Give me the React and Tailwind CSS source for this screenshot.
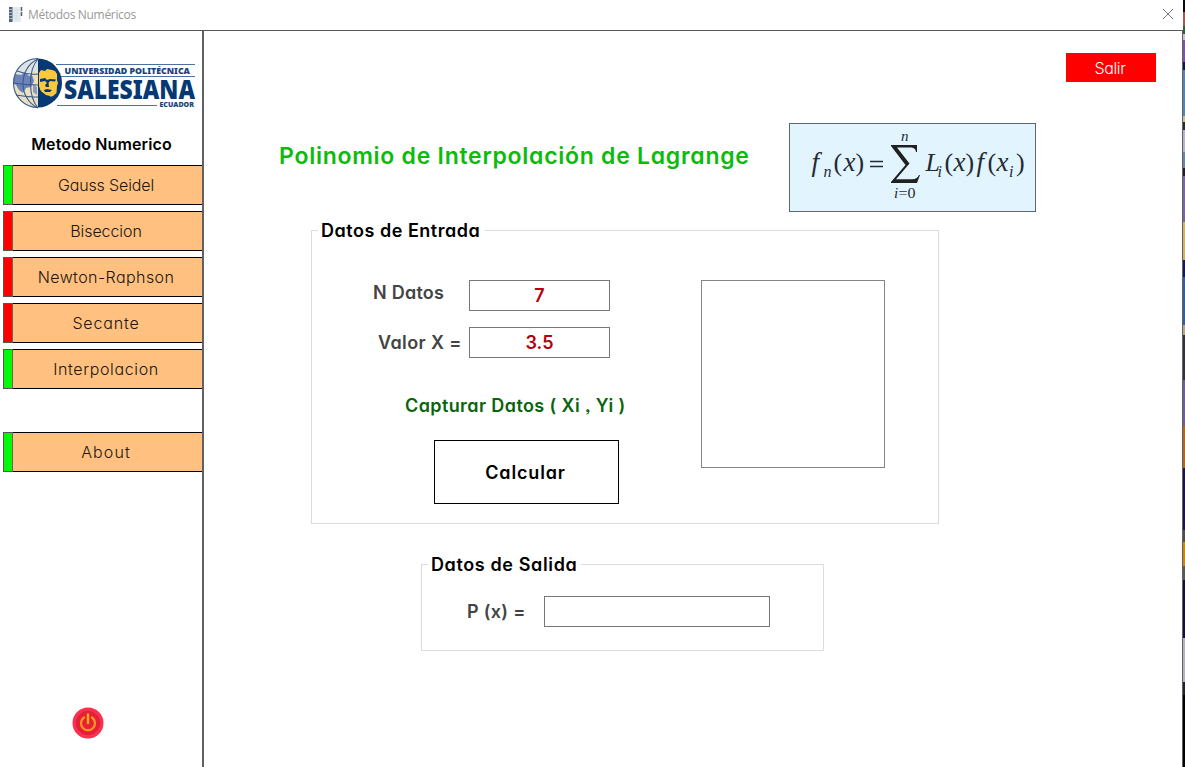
const gothic = "font-['Century_Gothic','Inter',sans-serif] [font-feature-settings:'cv11','ss03']";

const methods = [
  { label: 'Gauss Seidel', led: 'bg-[#00fb0a]', track: 'tracking-[-0.13px]' },
  { label: 'Biseccion', led: 'bg-[#fe0000]', track: 'tracking-[-0.08px]' },
  { label: 'Newton-Raphson', led: 'bg-[#fe0000]', track: 'tracking-[0.42px]' },
  { label: 'Secante', led: 'bg-[#fe0000]', track: 'tracking-[0.85px]' },
  { label: 'Interpolacion', led: 'bg-[#00fb0a]', track: 'tracking-[0.62px]' },
];

const edge = [
  [12, 'bg-[#0a0a0c]'], [14, 'bg-[#9c5a50]'], [8, 'bg-[#355a3c]'], [6, 'bg-[#c9c2cc]'],
  [22, 'bg-[#7a55a8]'], [8, 'bg-[#15183c]'], [46, 'bg-[#5b82b4]'], [6, 'bg-[#c8bfa2]'],
  [8, 'bg-[#2c2c30]'], [22, 'bg-[#b9b2cc]'], [16, 'bg-[#6a86a0]'], [8, 'bg-[#2a1c24]'],
  [46, 'bg-[#77669f]'], [38, 'bg-[#cfb06c]'], [17, 'bg-[#17175c]'], [48, 'bg-[#3a5c9c]'],
  [10, 'bg-[#b4a78c]'], [45, 'bg-[#34303c]'], [46, 'bg-[#6d5f93]'], [42, 'bg-[#b26420]'],
  [62, 'bg-[#1b1645]'], [12, 'bg-[#4c4f4a]'], [24, 'bg-[#c88618]'], [14, 'bg-[#5a5a50]'],
  [58, 'bg-[#130f38]'], [44, 'bg-[#b6b4ba]'], [13, 'bg-[#23202c]'], [72, 'bg-[#000000]'],
];

function Logo() {
  return (
    <svg width="186" height="54" viewBox="0 0 186 54" className="block overflow-visible">
      <defs>
        <clipPath id="globe"><circle cx="26.500" cy="27" r="24.500" /></clipPath>
      </defs>
      <g clipPath="url(#globe)">
        <rect x="0" y="0" width="54" height="54" fill="#eadfc2" />
        <path d="M2 3H28V17C23 13 19 20 14 18C9 18 6 24 2 24Z" fill="#dfe2e3" />
        <path d="M4 18L10 19L14 16L18 20L21 19L23 25L20 31L15 32L12 37L8 34L5 29L2 27Z" fill="#6c83b7" />
        <path d="M22 28L26 31V39L22 36Z" fill="#8c9cc0" />
        <rect x="27" y="0" width="27" height="54" fill="#063873" />
      </g>
      <g fill="none" stroke="#365b8d" strokeWidth="1.100">
        <path d="M27 2.500A24.500 24.500 0 0 0 27 51.500" />
        <path d="M27 3C7 12 7 43 27 52M27 3C17 14 17 40 27 52M6 15Q16 19 27 18M2 27Q14 29 27 29M5 39Q15 41 27 41" />
      </g>
      <path d="M28 17L30 14L34 15L36 13L41 14L44 15L46 18L46 24L47 27L46 30L45.500 37L42 40L39 41L34 40L30 36L28 30Z" fill="#fdc83b" />
      <path d="M29 23L34 22L36 24L39 23L45 23.500L44 25.500L39 25L37.500 27L38 31L35 31L34 29L36 27L34 25L29 26ZM33 34L36 33L41 34L39 36H34ZM28 33L31 36L35 39L39 40L40 42L33 43L28 39Z" fill="#063873" />
      <path d="M45 8.500H184M50 20.500H184M46 49.500H146" stroke="#4c719d" strokeWidth="1.200" />
      <text x="53.500" y="17.800" textLength="125.500" lengthAdjust="spacingAndGlyphs" fontFamily="Open Sans" fontWeight="800" fontSize="8.800" fill="#174478">UNIVERSIDAD POLITÉCNICA</text>
      <text x="53" y="43" textLength="131" lengthAdjust="spacingAndGlyphs" fontFamily="Open Sans" fontWeight="800" fontSize="27" fill="#063873">SALESIANA</text>
      <text x="148.500" y="50.900" textLength="34.500" lengthAdjust="spacingAndGlyphs" fontFamily="Open Sans" fontWeight="800" fontSize="6.500" fill="#174478">ECUADOR</text>
    </svg>
  );
}

function Formula() {
  return (
    <svg width="245" height="87" viewBox="790 124 245 87" className="block" fontFamily="Liberation Serif" fill="#252b35">
      <g fontStyle="italic">
        <text x="811.500" y="171" fontSize="27">f</text>
        <text x="823.500" y="176.500" fontSize="16">n</text>
        <text x="843.500" y="171" fontSize="27">x</text>
        <text x="901" y="141" fontSize="15">n</text>
        <text x="894" y="198" fontSize="15">i</text>
        <text x="925.500" y="171" fontSize="26">L</text>
        <text x="937.500" y="176.500" fontSize="16">i</text>
        <text x="953.500" y="171" fontSize="27">x</text>
        <text x="976.500" y="171" fontSize="27">f</text>
        <text x="996.500" y="171" fontSize="27">x</text>
        <text x="1009" y="176.500" fontSize="16">i</text>
      </g>
      <text x="833.500" y="171" fontSize="26">(</text>
      <text x="855.500" y="171" fontSize="26">)</text>
      <path d="M870 161.500H883M870 166.500H883" stroke="#252b35" strokeWidth="1.300" />
      <text x="898.500" y="198" fontSize="15" textLength="17" lengthAdjust="spacingAndGlyphs">=0</text>
      <text x="944.500" y="171" fontSize="26">(</text>
      <text x="965.500" y="171" fontSize="26">)</text>
      <text x="987.500" y="171" fontSize="26">(</text>
      <text x="1016" y="171" fontSize="26">)</text>
      <path d="M891 145H917V152H916C915.500 148.500 913.500 147.500 910 147.500H897L909.500 163.500L896 179.300H912C916 179.300 918 177.500 919 175H920L917 183H891V182L905.500 165L891 146Z" fill="#202020" />
    </svg>
  );
}

function GroupBox({ title, legend, className, children }) {
  return (
    <section className={`relative border border-[#dcdcdc] ${className}`}>
      <h2 className={`absolute left-[6px] -top-[13px] h-[26px] whitespace-nowrap bg-white pl-[3px] text-[18px] leading-[26px] font-semibold text-black ${legend}`}>{title}</h2>
      {children}
    </section>
  );
}

function MethodButton({ label, led, track }) {
  return (
    <div className="flex h-10 w-[199px]">
      <span className={`w-[10px] shrink-0 border border-r-[#666] border-[#555] ${led}`} />
      <button className={`flex-1 border-y border-black bg-[#ffc080] pr-[3px] text-center text-[16px] font-light text-[#20160c] ${track}`}>{label}</button>
    </div>
  );
}

export default function App() {
  return (
    <div className={`flex h-[767px] w-[1185px] overflow-hidden bg-white ${gothic}`}>
      <div className="flex w-[1183px] shrink-0 flex-col">
        <header className="flex h-[31px] shrink-0 items-center border-b border-[#54565a] pl-[8px] pr-[9px]">
          <svg width="15" height="17" viewBox="0 0 15 17" className="-mt-[2px]">
            <rect x="1" y="1" width="12" height="15" fill="#e5ebee" />
            <rect x="1" y="1" width="3.500" height="15" fill="#526481" />
            <path d="M1 3.500H5M1 6.500H5M1 9.500H5M1 12.500H5" stroke="#aab5c3" />
            <path d="M6 4H10M6 7H10M6 10H10M6 13H10" stroke="#d1dce0" />
            <path d="M13.500 1V5M13.500 6V10" stroke="#59616b" strokeWidth="1.500" />
          </svg>
          <span className="ml-[5px] font-['Open_Sans'] text-[12px] tracking-[-0.32px] text-[#999]">Métodos Numéricos</span>
          <svg width="12" height="12" viewBox="0 0 12 12" className="ml-auto -mt-[2px]"><path d="M1 1L11 11M11 1L1 11" stroke="#777" strokeWidth="1" /></svg>
        </header>

        <div className="flex min-h-0 flex-1">
          <aside className="flex w-[204px] shrink-0 flex-col border-r-2 border-[#606266]">
            <div className="mt-[25px] ml-[11px] h-[54px]"><Logo /></div>
            <h1 className="mt-[22px] h-6 w-[203px] whitespace-nowrap text-center text-[16px] leading-6 font-semibold tracking-[0.12px] text-black">Metodo Numerico</h1>
            <nav className="mt-[9px] ml-[3px] flex flex-col gap-[6px]">
              {methods.map((m) => <MethodButton key={m.label} {...m} />)}
            </nav>
            <div className="mt-[43px] ml-[3px]"><MethodButton label="About" led="bg-[#00fb0a]" track="tracking-[1.1px]" /></div>
            <svg width="34" height="34" viewBox="0 0 34 34" className="mt-[234px] ml-[71px]">
              <circle cx="17" cy="17" r="15.500" fill="#f9304f" />
              <circle cx="17" cy="17" r="11.500" fill="#e82035" stroke="#d71d3b" />
              <path d="M13 11.500A7 7 0 1 0 21 11.500" fill="none" stroke="#ff991e" strokeWidth="2.200" strokeLinecap="round" />
              <path d="M17 8.500V17" stroke="#ffae23" strokeWidth="2.400" strokeLinecap="round" />
            </svg>
          </aside>

          <main className="flex flex-1 flex-col border-r border-[#606266]">
            <button className="mt-[22px] mr-[26px] h-[29px] w-[90px] self-end bg-[#fe0000] pr-[2px] text-[16px] font-light tracking-[-0.4px] text-white">Salir</button>

            <div className="mt-[41px] ml-[75px] flex h-[89px]">
              <h1 className="w-[510px] pt-[17px] text-[23px] leading-[32px] font-semibold tracking-[0.73px] whitespace-nowrap text-[#0dbb0d]">Polinomio de Interpolación de Lagrange</h1>
              <div className="h-[89px] w-[247px] border border-[#5e6670] bg-[#e2f5fe]"><Formula /></div>
            </div>

            <GroupBox title="Datos de Entrada" legend="w-[167px] tracking-[0.52px]" className="mt-[18px] ml-[107px] h-[294px] w-[628px]">
              <div className="flex text-[18px] font-semibold text-[#444]">
                <div className="w-[389px]">
                  <div className="mt-[49px] flex h-[31px]">
                    <label className="ml-[61px] w-[96px] text-[18px] leading-[25px] tracking-[0.25px] whitespace-nowrap">N Datos</label>
                    <div className="w-[141px] border border-[#777] text-center leading-[29px] text-[#b4000c]">7</div>
                  </div>
                  <div className="mt-[16px] flex h-[31px]">
                    <label className="ml-[66px] w-[91px] pt-px text-[18px] leading-[30px] tracking-[0.4px] whitespace-nowrap">Valor X =</label>
                    <div className="w-[141px] border border-[#777] text-center leading-[29px] text-[#b4000c]">3.5</div>
                  </div>
                  <div className="mt-[35px] ml-[93px] h-[26px] text-[18px] leading-[26px] tracking-[0.4px] whitespace-nowrap text-[#07650b]">Capturar Datos ( Xi , Yi )</div>
                  <button className="mt-[21px] ml-[122px] block h-[64px] w-[185px] border border-black pr-[2px] text-[18px] font-semibold tracking-[0.85px] text-black">Calcular</button>
                </div>
                <div className="mt-[49px] h-[188px] w-[184px] border border-[#858585]" />
              </div>
            </GroupBox>

            <GroupBox title="Datos de Salida" legend="w-[153px] tracking-[0.62px]" className="mt-[40px] ml-[217px] h-[87px] w-[403px]">
              <div className="mt-[31px] ml-[45px] flex h-[31px] text-[18px] font-semibold text-[#444]">
                <label className="w-[77px] pt-px leading-[30px] tracking-[0.3px] whitespace-nowrap">P (x) =</label>
                <div className="w-[226px] border border-[#777]" />
              </div>
            </GroupBox>
          </main>
        </div>
      </div>
      <div className="flex w-[2px] shrink-0 flex-col">
        {edge.map(([h, color], i) => <span key={i} className={`shrink-0 ${color}`} style={{ height: h }} />)}
      </div>
    </div>
  );
}
